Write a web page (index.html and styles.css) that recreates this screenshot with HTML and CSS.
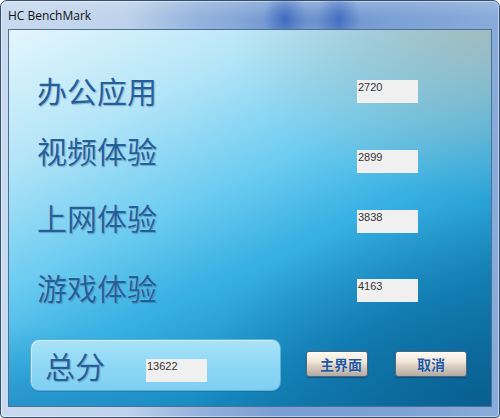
FILE: index.html
```html
<!DOCTYPE html>
<html>
<head>
<meta charset="utf-8">
<link rel="stylesheet" href="styles.css">
</head>
<body>
<div class="window">
  <div class="titlebar"><span class="title">HC BenchMark</span></div>
  <div class="client">
    <div class="scores">
      <div class="row"><span class="label">办公应用</span><span class="box">2720</span></div>
      <div class="row"><span class="label">视频体验</span><span class="box">2899</span></div>
      <div class="row"><span class="label">上网体验</span><span class="box">3838</span></div>
      <div class="row"><span class="label">游戏体验</span><span class="box">4163</span></div>
    </div>
    <div class="footer">
      <div class="total"><span class="label total-label">总分</span><span class="box total-box">13622</span></div>
      <button class="btn btn-main">主界面</button>
      <button class="btn btn-cancel">取消</button>
    </div>
  </div>
</div>
</body>
</html>
```
FILE: styles.css
```css
html, body {
  margin: 0;
  padding: 0;
  width: 500px;
  height: 418px;
  overflow: hidden;
  background: #ffffff;
}

.window {
  box-sizing: border-box;
  width: 500px;
  height: 418px;
  border: 1px solid #34506f;
  border-radius: 7px 7px 4px 4px;
  background: linear-gradient(90deg, #c8daef 0%, #bdd2eb 25%, #93b2dc 40%, #7a9fd4 55%, #7ca1d5 80%, #88acd9 100%);
  display: flex;
  flex-direction: column;
  box-shadow: inset 0 0 0 1px rgba(255,255,255,0.45);
}

.titlebar {
  height: 28px;
  display: flex;
  align-items: center;
  padding-left: 7px;
  flex-shrink: 0;
  border-radius: 6px 6px 0 0;
  background:
    radial-gradient(ellipse 22px 30px at 284px 18px, rgba(45,90,185,0.7) 0%, rgba(45,90,185,0.3) 50%, rgba(45,90,185,0) 100%),
    radial-gradient(ellipse 22px 30px at 338px 18px, rgba(45,90,185,0.65) 0%, rgba(45,90,185,0.3) 50%, rgba(45,90,185,0) 100%),
    radial-gradient(ellipse 80px 16px at 310px 20px, rgba(70,110,190,0.3), rgba(70,110,190,0) 100%),
    linear-gradient(180deg, rgba(255,255,255,0.18) 0%, rgba(255,255,255,0) 60%);
}

.title {
  font-family: "Open Sans", "Noto Sans", sans-serif;
  font-size: 12px;
  color: #111;
  padding-top: 1px;
}

.client {
  box-sizing: border-box;
  margin: 0 7px;
  height: 378px;
  border: 1px solid #4f6f93;
  background:
    radial-gradient(ellipse 260px 170px at 100% 0%, rgba(170,180,175,0.75), rgba(170,180,175,0) 100%),
    radial-gradient(ellipse 300px 200px at 100% 100%, rgba(5,80,130,0.55), rgba(5,80,130,0) 100%),
    radial-gradient(ellipse 200px 80px at 0% 100%, rgba(20,110,170,0.35), rgba(20,110,170,0) 100%),
    linear-gradient(155deg, #e4f6fc 0%, #b4e5f8 22%, #6fcdf1 42%, #37b0e2 58%, #168ac0 78%, #0d6f9f 100%);
}

.scores {
  padding: 45px 0 0 28px;
}

.row {
  display: flex;
  align-items: flex-start;
}

.row:nth-child(1) { height: 60px; }
.row:nth-child(2) { height: 67px; }
.row:nth-child(3) { height: 70px; }
.row:nth-child(4) { height: 30px; }

.label {
  width: 320px;
  font-family: "Noto Sans CJK SC", sans-serif;
  font-size: 30px;
  line-height: 30px;
  color: #22609c;
  text-shadow: 0 0 1px rgba(255,255,255,0.6), 1px 1px 1px rgba(0,40,90,0.3);
}

.box {
  box-sizing: border-box;
  width: 61px;
  height: 23px;
  background: #f0f0f0;
  font-family: "Liberation Sans", sans-serif;
  font-size: 11px;
  line-height: 13px;
  color: #333;
  padding: 1px 0 0 1px;
}

.row:nth-child(1) .box { margin-top: 5px; }
.row:nth-child(2) .box { margin-top: 15px; }
.row:nth-child(3) .box { margin-top: 8px; }
.row:nth-child(4) .box { margin-top: 7px; }

.footer {
  display: flex;
  align-items: flex-start;
  margin-top: 37px;
  padding-left: 21px;
}

.total {
  box-sizing: border-box;
  width: 251px;
  height: 52px;
  border: 1px solid #5cb0d9;
  border-radius: 9px;
  background: linear-gradient(180deg, #a9e3f8 0%, #8fd8f5 50%, #7fcff2 100%);
  box-shadow: inset 1px 1px 0 rgba(255,255,255,0.45), 0 1px 0 rgba(20,90,150,0.35);
  display: flex;
  align-items: flex-start;
  padding: 10px 0 0 14px;
}

.total-label {
  width: 101px;
}

.total-box {
  margin-top: 9px;
}

.btn {
  box-sizing: border-box;
  height: 26px;
  margin-top: 12px;
  border: 1px solid #4e6580;
  border-radius: 3px;
  background: linear-gradient(180deg, #fdf9f2 0%, #f1e7d9 40%, #d8cdbf 60%, #b3aaa0 100%);
  box-shadow: inset 0 1px 0 #ffffff, 0 1px 1px rgba(0,40,80,0.35);
  font-family: "Noto Sans CJK SC", sans-serif;
  font-weight: bold;
  font-size: 14px;
  line-height: 20px;
  color: #1f56a0;
  text-shadow: 0 0 1px #ffffff;
  padding: 0;
  cursor: pointer;
}

.btn-main {
  width: 62px;
  margin-left: 25px;
  padding-left: 8px;
}

.btn-cancel {
  width: 72px;
  margin-left: 27px;
}
```
